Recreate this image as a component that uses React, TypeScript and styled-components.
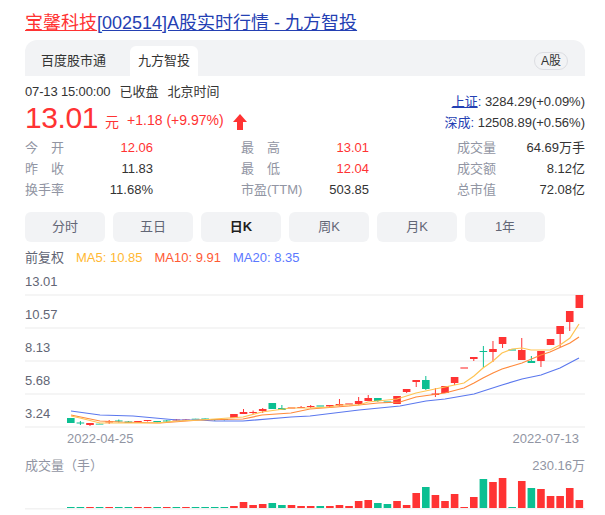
import React from "react";
import styled, { createGlobalStyle } from "styled-components";

const Global = createGlobalStyle`
  html, body { margin: 0; padding: 0; background: #fff; }
  body { font-family: Arial, "Liberation Sans", "Noto Sans CJK SC", sans-serif; font-size: 13px; color: #1f1f1f; }
`;

const Page = styled.div`
  width: 560px;
  height: 515px;
  padding: 11px 20px 0 25px;
  overflow: hidden;
`;
const Title = styled.h1`
  margin: 0 0 5px;
  font-size: 18px;
  font-weight: 400;
  line-height: 24px;
  white-space: nowrap;
`;
const TitleLink = styled.a<{ $red?: boolean }>`
  color: ${(p) => (p.$red ? "#ff3333" : "#2440b3")};
  text-decoration: underline;
`;
const TabBar = styled.div`
  height: 36px;
  display: flex;
  align-items: flex-end;
  justify-content: space-between;
  background: #f2f3f5;
  border-radius: 12px 12px 0 0;
  padding: 0 17px 0 0;
`;
const TabList = styled.div`
  display: flex;
`;
const Tab = styled.div<{ $active?: boolean }>`
  height: 30px;
  line-height: 30px;
  padding: 0 ${(p) => (p.$active ? "8px" : "16px")};
  margin-right: ${(p) => (p.$active ? "0" : "8px")};
  border-radius: 6px 6px 0 0;
  background: ${(p) => (p.$active ? "#fff" : "transparent")};
  color: #333;
  font-size: 13px;
`;
const Market = styled.div`
  align-self: center;
  margin-top: 5px;
  width: 32px;
  height: 16px;
  line-height: 16px;
  text-align: center;
  border: 1px solid #dcdde2;
  border-radius: 9px;
  font-size: 12px;
  color: #333;
`;
const Header = styled.div`
  display: flex;
  justify-content: space-between;
  padding-top: 6px;
`;
const QuoteTime = styled.div`
  height: 20px;
  line-height: 20px;
  color: #333;
  display: flex;
  gap: 9px;
`;
const Clock = styled.span`
  letter-spacing: -0.15px;
`;
const PriceRow = styled.div`
  display: flex;
  align-items: center;
  height: 33px;
  color: #ff3333;
`;
const Price = styled.span`
  font-size: 30px;
  line-height: 33px;
  letter-spacing: -0.4px;
  margin: 0 7px 3px 0;
`;
const Unit = styled.span`
  font-size: 14px;
  margin: 4px 8px 0 0;
`;
const Change = styled.span`
  font-size: 14px;
  margin: 2px 9px 0 0;
`;
const UpArrow = styled.svg`
  margin-top: 6px;
`;
const Indexes = styled.div`
  padding-top: 9px;
  text-align: right;
  line-height: 21px;
  color: #333;
`;
const IndexLink = styled.span<{ $under?: boolean }>`
  color: #2440b3;
  text-decoration: ${(p) => (p.$under ? "underline" : "none")};
`;
const Stats = styled.div`
  display: grid;
  grid-template-columns: repeat(3, 128px);
  column-gap: 88px;
  margin-top: 2px;
`;
const Stat = styled.div`
  display: flex;
  justify-content: space-between;
  height: 21px;
  line-height: 21px;
`;
const Label = styled.span<{ $spread?: boolean }>`
  color: #9195a3;
  display: flex;
  justify-content: space-between;
  width: ${(p) => (p.$spread ? "39px" : "auto")};
`;
const Value = styled.span<{ $red?: boolean }>`
  color: ${(p) => (p.$red ? "#ff3333" : "#333")};
`;
const Periods = styled.div`
  display: flex;
  gap: 8px;
  margin-top: 12px;
`;
const Period = styled.div<{ $active?: boolean }>`
  width: 80px;
  height: 30px;
  line-height: 30px;
  text-align: center;
  border-radius: 6px;
  background: #f2f3f5;
  color: ${(p) => (p.$active ? "#1f1f1f" : "#626675")};
  font-weight: ${(p) => (p.$active ? 700 : 400)};
`;
const Legend = styled.div`
  display: flex;
  gap: 12px;
  height: 20px;
  line-height: 20px;
  margin-top: 6px;
  color: #626675;
`;
const Ma = styled.span<{ $color: string }>`
  color: ${(p) => p.$color};
`;
const Chart = styled.div`
  position: relative;
  height: 160px;
`;
const AxisRow = styled.div`
  height: 25px;
  line-height: 26px;
  padding-top: 6px;
  border-bottom: 2px solid #f5f5f5;
  color: #626675;
  &:first-child { height: 26px; line-height: 28px; padding-top: 0; }
`;
const PlotSvg = styled.svg`
  position: absolute;
  left: 0;
  top: 0;
`;
const Dates = styled.div`
  display: flex;
  justify-content: space-between;
  padding: 0 6px 0 42px;
  height: 20px;
  line-height: 20px;
  margin-top: 1px;
  color: #9195a3;
`;
const VolumeHead = styled.div`
  display: flex;
  justify-content: space-between;
  height: 20px;
  line-height: 20px;
  margin-top: 7px;
  color: #9195a3;
`;
const VolumeSvg = styled.svg`
  display: block;
`;

const R = "#ff3333";
const G = "#0bbf92";

// body top, body bottom, wick top, wick bottom, up (red)
type C = [number, number, number?, number?, boolean?];
const candles: C[] = [
  [418, 423, 418, 423, false],
  [422.5, 423.5, 421, 425, false],
  [423, 425, 423, 426, true],
  [423.5, 425, 423.5, 425, false],
  [421.5, 422.5, 420, 424, true],
  [420.5, 421.5, 419.5, 422.5, false],
  [421.5, 423, 421, 423, false],
  [421, 422, 421, 422.5, true],
  [420, 421, 420, 421.5, true],
  [421, 422, 421, 422.5, false],
  [420.5, 421.5, 420, 422, false],
  [419.5, 420.5, 419, 421, true],
  [419.5, 420.5, 419, 421, true],
  [418.5, 420, 418.5, 420, false],
  [418.5, 420, 418.5, 420.5, false],
  [419, 420, 419, 421, false],
  [419, 420, 419, 420.5, false],
  [414, 418, 414, 418, true],
  [412, 414, 409, 414, true],
  [412, 413, 410.5, 414, true],
  [409, 411, 408, 413, true],
  [403, 409, 403, 409, false],
  [408, 410, 405, 410, false],
  [407, 409, 407, 409, true],
  [407, 408, 406, 408, true],
  [406, 407, 405, 408, true],
  [405, 407, 405, 407, false],
  [405, 406.5, 405, 407, true],
  [404, 405.5, 399, 406, true],
  [403, 405, 403, 405, true],
  [401, 404, 397, 405, true],
  [398, 401, 395, 401, true],
  [398, 401, 398, 402, false],
  [401, 403, 401, 403, false],
  [396, 404, 396, 404, true],
  [389, 392, 389, 393, true],
  [380, 382, 380, 387, true],
  [380, 389, 376, 390, false],
  [393.5, 395, 388, 397, true],
  [386, 393, 386, 393, true],
  [377, 383, 377, 385, true],
  [367, 369, 367, 369, true],
  [357, 359, 357, 361, true],
  [351, 352, 346, 368, false],
  [349, 352, 341, 362, true],
  [337, 344, 337, 348, true],
  [349, 351, 349, 351, false],
  [350, 360, 338, 360, true],
  [361, 363, 356, 363, false],
  [351, 361, 351, 367, true],
  [339, 345, 339, 345, true],
  [326, 334, 326, 347, true],
  [311, 322, 311, 331, true],
  [295, 308, 295, 308, true],
];

const ma5 = "71,416 80,418 100,423 133,423 157,423 177,421 200,420 243,417 262,412 291,408 310,408 330,407 339,405 359,405 368,402 397,399 416,393 435,389 445,387 464,383 474,376 483,368 493,361 502,353 512,349 522,348 531,350 550,350 560,345 570,338 579,324";
const ma10 = "71,415 100,421 120,422 160,423 200,420 243,419 262,415 291,413 310,409 349,406 378,403 400,402 416,397 445,393 464,388 474,383 483,378 493,373 502,369 512,366 522,363 541,355 550,352 570,343 579,337";
const ma20 = "71,411 100,415 133,416 177,420 200,420 215,421 243,421 291,417 310,416 359,410 400,406 426,401 445,399 474,394 502,385 522,379 541,375 560,368 579,358";

const vols: [number, boolean][] = [
  [1, false], [1, false], [1, true], [1, false], [1, true], [1, false], [1, false], [1, true], [1, true], [1, false],
  [1, true], [1, false], [1, true], [1, false], [1, false], [1, false], [1, false], [2, true], [6, true], [3, true],
  [4, true], [5, false], [3, false], [3, true], [2, true], [2, true], [2, false], [2, true], [3, true], [2, true],
  [7, true], [8, true], [5, false], [4, false], [7, true], [3, true], [15, true], [21, false], [13, true], [7, true],
  [14, true], [1, true], [11, true], [29, false], [26, true], [30, true], [1, false], [27, true], [20, false], [19, true],
  [12, true], [12, true], [20, true], [8, true],
];

const cx = (i: number) => 70.8 + 9.595 * i;

const axis = ["13.01", "10.57", "8.13", "5.68", "3.24"];
const periods = ["分时", "五日", "日K", "周K", "月K", "1年"];

export default function App() {
  return (
    <Page>
      <Global />
      <Title>
        <TitleLink $red>宝馨科技</TitleLink>
        <TitleLink>[002514]A股实时行情 - 九方智投</TitleLink>
      </Title>
      <TabBar>
        <TabList>
          <Tab>百度股市通</Tab>
          <Tab $active>九方智投</Tab>
        </TabList>
        <Market>A股</Market>
      </TabBar>
      <Header>
        <div>
          <QuoteTime>
            <Clock>07-13 15:00:00</Clock>
            <span>已收盘</span>
            <span>北京时间</span>
          </QuoteTime>
          <PriceRow>
            <Price>13.01</Price>
            <Unit>元</Unit>
            <Change>+1.18 (+9.97%)</Change>
            <UpArrow width="14" height="16" viewBox="0 0 14 16">
              <path d="M7 0 L14 8 H10 V16 H4 V8 H0 Z" fill={R} />
            </UpArrow>
          </PriceRow>
        </div>
        <Indexes>
          <div>
            <IndexLink $under>上证</IndexLink>
            <IndexLink>:</IndexLink> 3284.29(+0.09%)
          </div>
          <div>
            <IndexLink>深成:</IndexLink> 12508.89(+0.56%)
          </div>
        </Indexes>
      </Header>
      <Stats>
        <Stat><Label $spread><span>今</span><span>开</span></Label><Value $red>12.06</Value></Stat>
        <Stat><Label $spread><span>最</span><span>高</span></Label><Value $red>13.01</Value></Stat>
        <Stat><Label>成交量</Label><Value>64.69万手</Value></Stat>
        <Stat><Label $spread><span>昨</span><span>收</span></Label><Value>11.83</Value></Stat>
        <Stat><Label $spread><span>最</span><span>低</span></Label><Value $red>12.04</Value></Stat>
        <Stat><Label>成交额</Label><Value>8.12亿</Value></Stat>
        <Stat><Label>换手率</Label><Value>11.68%</Value></Stat>
        <Stat><Label>市盈(TTM)</Label><Value>503.85</Value></Stat>
        <Stat><Label>总市值</Label><Value>72.08亿</Value></Stat>
      </Stats>
      <Periods>
        {periods.map((p) => (
          <Period key={p} $active={p === "日K"}>{p}</Period>
        ))}
      </Periods>
      <Legend>
        <span>前复权</span>
        <Ma $color="#ffb833">MA5: 10.85</Ma>
        <Ma $color="#ff5a33">MA10: 9.91</Ma>
        <Ma $color="#5b78ff">MA20: 8.35</Ma>
      </Legend>
      <Chart>
        {axis.map((a) => (
          <AxisRow key={a}>{a}</AxisRow>
        ))}
        <PlotSvg width="560" height="160" viewBox="25 268 560 160">
          {candles.map(([t, b, w1, w2, up], i) => {
            const c = up ? R : G;
            const x = cx(i);
            const thin = b - t <= 2;
            return (
              <g key={i} opacity={thin && w1 === t && w2 === b ? 0.55 : 1}>
                <line x1={x} x2={x} y1={w1} y2={w2} stroke={c} strokeWidth="1" />
                <rect x={x - 3.8} y={t} width="7.6" height={b - t} fill={c} />
              </g>
            );
          })}
          <polyline points={ma20} fill="none" stroke="#5b78ee" strokeWidth="1.2" />
          <polyline points={ma10} fill="none" stroke="#ff8a3c" strokeWidth="1.2" />
          <polyline points={ma5} fill="none" stroke="#ffc453" strokeWidth="1.2" />
        </PlotSvg>
      </Chart>
      <Dates>
        <span>2022-04-25</span>
        <span>2022-07-13</span>
      </Dates>
      <VolumeHead>
        <span>成交量（手）</span>
        <span>230.16万</span>
      </VolumeHead>
      <VolumeSvg width="560" height="35" viewBox="25 476 560 35">
        <rect x="25" y="508" width="560" height="1.5" fill="#f2f2f2" />
        {vols.map(([h, up], i) => (
          <rect key={i} x={cx(i) - 3.8} y={508 - h} width="7.6" height={h} fill={up ? R : G} />
        ))}
      </VolumeSvg>
    </Page>
  );
}
